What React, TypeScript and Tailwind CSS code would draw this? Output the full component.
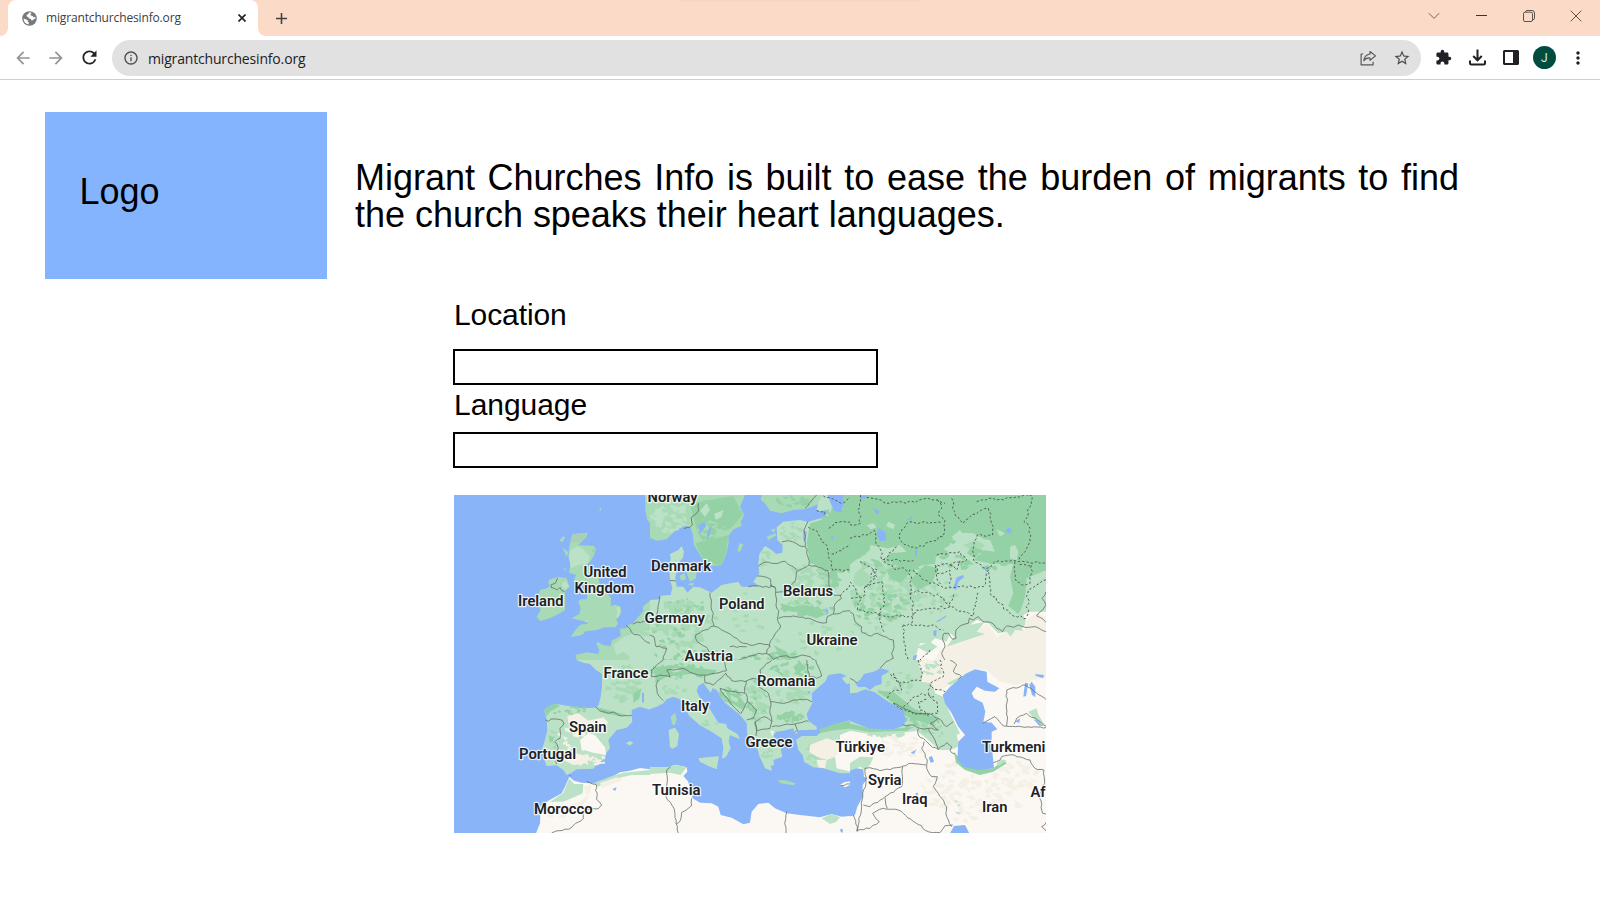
import type { ReactNode } from "react";
import { MdAdd, MdArrowBack, MdArrowForward, MdExtension, MdInfoOutline, MdMoreVert, MdRefresh, MdStarBorder } from "react-icons/md";

const WATER = "#8ab4f8";
const MID = "#a8dab5";
const LIGHT = "#bbe2c6";
const DARK = "#94d2a5";
const SAND = "#f5f0e5";
const PALE = "#fbf8f3";

type Shape = [fill: string, points: string];
/** Scatter area: centre, radii, count, blob size, fill. */
type Scatter = [cx: number, cy: number, rx: number, ry: number, count: number, size: number, fill: string];

interface Tile {
  id: string;
  x: number;
  y: number;
  shapes: Shape[];
  scatter: Scatter[];
  over: Shape[];
  borders: string[];
  dashed: string[];
}

const tiles: Tile[] = [
  {
    id: "nw", x: 450, y: 490,
    shapes: [
      [MID, "368,132 412,128 410,140 385,165 432,168 438,178 430,200 420,215 410,225 425,235 445,262 450,285 462,285 470,308 483,325 482,348 495,344 512,350 514,368 498,388 505,402 495,412 465,412 440,420 405,424 400,432 385,438 362,440 375,422 385,410 395,403 413,402 412,394 395,392 365,385 388,372 392,355 385,335 392,328 410,328 412,300 410,285 385,278 370,275 378,255 370,252 357,248 362,222 355,200 358,170 362,150"],
      [MID, "300,268 325,261 350,264 357,288 345,305 345,360 330,370 300,385 270,393 260,380 272,360 262,340 270,300 292,295 300,286 294,276"],
      [MID, "328,152 340,138 345,143 338,156"], [MID, "337,172 355,187 350,200"], [MID, "447,60 453,52 452,63"], [MID, "342,235 348,237 344,244"],
      [MID, "585,15 600,15 600,100 592,90 586,60"],
      [MID, "600,332 578,350 580,362 565,380 548,400 530,407 528,415 510,416 512,438 485,452 482,468 460,466 445,457 438,460 448,480 445,492 410,487 376,495 382,513 415,520 430,527 600,527"],
    ],
    scatter: [[545, 490, 20, 30, 6, 8, LIGHT], [560, 500, 35, 20, 10, 6, DARK]],
    over: [
      ["#aacfb8", "370,132 410,129 405,145 385,155 365,160 362,150"],
      [LIGHT, "360,182 385,168 402,180 420,200 412,222 385,225 362,235 358,205"],
      [LIGHT, "490,465 525,438 600,420 600,527 485,527 500,500"], [MID, "560,420 600,428 600,440 575,436"], [MID, "490,500 520,485 540,500 525,527 495,527"],
      [LIGHT, "345,272 358,290 345,300 335,282"], [DARK, "425,182 436,175 430,188"], [LIGHT, "398,390 415,392 411,398"],
      [LIGHT, "498,350 510,352 508,378 498,388 502,365"],
    ],
    borders: ["323,264 316,280 304,284 303,292 322,300 330,292 335,302 344,304", "528,406 540,416 552,434 570,436 580,448 600,460", "548,402 562,396 600,395"],
    dashed: [],
  },
  {
    id: "n", x: 650, y: 490,
    shapes: [
      [MID, "-2,15 285,15 270,50 282,75 272,95 275,108 250,118 235,138 236,160 228,195 215,225 185,228 165,222 150,195 132,165 128,130 120,112 105,108 80,118 50,148 20,152 -2,142"],
      [MID, "335,15 332,30 345,40 360,62 395,70 430,60 465,58 500,45 530,15"],
      [LIGHT, "602,15 602,527 -2,527 -2,330 30,328 30,317 62,315 67,292 60,270 58,240 62,205 60,192 85,180 95,168 102,185 98,205 85,218 82,240 76,262 80,290 100,290 112,308 130,290 150,292 185,308 215,285 240,280 265,276 275,290 300,290 325,287 310,275 328,250 325,225 328,192 345,168 365,180 378,192 397,188 398,165 382,150 380,112 400,95 450,90 475,96 500,88 528,82 524,68 500,60 505,35 520,15"],
      [MID, "262,182 268,160 280,163 270,186"], [MID, "350,140 375,130 380,136 355,150"], [MID, "362,120 376,115 372,128"],
      [MID, "110,250 125,235 140,238 138,265 120,275"], [MID, "88,258 104,250 108,268 94,272"], [MID, "112,282 132,278 128,288"],
    ],
    scatter: [
      [55, 80, 50, 48, 32, 10, LIGHT], [190, 90, 55, 70, 34, 10, DARK], [430, 35, 55, 14, 20, 8, DARK], [425, 125, 32, 28, 18, 8, MID],
      [90, 400, 85, 70, 60, 13, MID], [280, 370, 90, 60, 14, 9, MID], [110, 345, 60, 20, 16, 6, DARK], [60, 430, 50, 50, 14, 8, DARK],
      [550, 180, 50, 120, 80, 13, DARK], [460, 270, 80, 40, 40, 12, MID], [470, 355, 75, 22, 34, 9, DARK], [455, 320, 70, 30, 26, 10, MID],
      [480, 450, 105, 50, 14, 9, MID], [150, 500, 140, 20, 44, 8, DARK], [380, 500, 80, 18, 22, 8, DARK], [350, 210, 30, 25, 12, 9, MID],
    ],
    over: [
      [DARK, "480,100 600,65 600,240 550,250 530,230 480,220 470,160"], [DARK, "560,15 600,15 600,80 530,90 545,60 580,60"],
      [DARK, "135,160 235,135 228,190 215,224 165,220"], [DARK, "120,40 250,18 278,75 240,118 180,90 140,120"],
      [LIGHT, "150,62 170,40 180,60 165,80"], [LIGHT, "192,72 220,60 215,80 198,90"],
      [LIGHT, "15,80 30,55 45,75 35,105 18,110"], [LIGHT, "85,50 110,42 105,65 88,72"],
      [LIGHT, "335,230 400,218 430,245 420,285 385,290 350,255"],
      [DARK, "390,340 430,350 470,345 530,372 500,385 440,365 400,362"], [DARK, "370,465 410,485 430,515 395,505"],
      [WATER, "532,15 578,15 580,35 575,68 552,62 540,35"], [WATER, "145,105 165,96 168,108 150,132"], [WATER, "172,125 182,108 182,130 170,150"],
      [WATER, "460,120 470,125 466,155 460,150"], [WATER, "540,142 552,138 548,150"], [WATER, "528,350 536,365 530,378"], [WATER, "500,65 530,60 528,80 505,78"],
    ],
    borders: [
      "145,40 146,62 138,72 124,82 127,104 120,112 102,116", "60,271 78,273", "180,308 184,330 183,350 190,370 186,390 192,408",
      "192,408 165,420 137,435 142,455 170,472 178,486", "192,408 215,420 240,432 262,446 280,460 310,466 330,460 355,464 362,470",
      "360,285 376,292 380,330 378,345 386,362 382,388 392,408 375,432 362,452 350,490", "295,290 320,288 375,292", "322,258 350,262 362,268 364,288",
      "325,228 345,216 385,220 405,214 430,230 442,242 436,272 415,290 400,305 378,307", "395,156 415,152 438,160 450,168 464,170",
      "474,95 462,120 466,160 470,190 478,222 460,235 445,242", "475,225 505,232 534,242 536,275 542,300 550,315 568,315 575,325 556,340 550,372 532,380 530,398",
      "385,385 400,380 440,380 485,388 500,395 530,398", "550,372 600,362", "30,318 24,350 20,375 0,400", "0,435 12,440 18,470 50,475 40,500 45,527",
      "230,518 262,512 300,498 325,490 350,490 370,508 400,498 430,502 455,495 480,500 498,512 500,527", "240,470 290,470", "500,15 485,32 465,55",
    ],
    dashed: ["475,112 500,122 512,145 525,160 535,190 545,215 548,242 600,240", "536,115 555,98 600,96", "545,192 575,182 600,165", "520,18 555,30 582,38 600,22", "500,62 525,66 520,78", "600,285 585,300 570,318"],
  },
  {
    id: "ne", x: 850, y: 490,
    shapes: [[LIGHT, "-2,15 590,15 590,527 -2,527"]],
    scatter: [[110, 300, 105, 85, 130, 11, MID], [380, 190, 120, 50, 50, 10, DARK], [120, 200, 115, 50, 55, 10, DARK], [90, 350, 85, 45, 40, 9, DARK], [260, 320, 60, 50, 26, 8, MID], [60, 420, 55, 30, 10, 8, MID]],
    over: [
      [DARK, "-2,15 590,15 590,250 560,265 530,300 520,345 505,372 475,348 490,310 480,260 490,222 430,222 370,210 400,185 425,160 370,130 320,128 300,160 290,190 258,200 255,222 215,225 190,240 150,235 110,200 60,180 30,200 -2,225"],
      [LIGHT, "305,140 330,120 345,140 420,150 435,185 385,178 340,200 280,178 300,165 335,165"], [LIGHT, "480,170 495,165 505,185 500,210 480,205"], [LIGHT, "440,118 465,130 450,140"],
      [LIGHT, "60,165 115,175 150,165 170,185 120,190 100,215 60,205"], [LIGHT, "115,95 135,105 130,118 108,108"], [LIGHT, "530,265 590,240 590,380 535,370 510,372 525,320"],
      [MID, "15,250 50,220 80,240 65,270 30,290 10,280"], [DARK, "110,240 165,220 185,245 150,280 120,265"], [DARK, "180,270 225,225 265,235 245,280 205,300"],
      [MID, "340,165 375,150 405,165 380,190"], [DARK, "365,170 395,180 375,205 350,190"], [LIGHT, "50,105 70,100 80,112 62,118"], [LIGHT, "40,240 70,225 90,245 65,262"],
      [PALE, "590,355 555,365 540,365 520,375 530,400 510,420 490,405 440,425 415,400 380,390 340,420 345,435 320,445 300,430 290,455 255,445 240,460 210,460 200,490 190,527 590,527"],
      [SAND, "590,380 555,370 525,395 525,422 490,412 440,440 410,400 370,430 340,450 300,460 270,480 245,527 590,527"],
      [LIGHT, "330,410 405,395 380,425 405,432 350,450 290,470 312,440"], [LIGHT, "440,412 500,395 520,422 495,420 482,440 470,425 442,430"],
      [LIGHT, "200,470 240,455 262,470 235,490"], [LIGHT, "540,345 590,310 590,365 560,365"],
      [WATER, "85,115 105,125 110,150 90,155 80,130"], [WATER, "30,18 52,15 45,26 32,26"], [WATER, "70,55 88,62 84,74 76,70"], [WATER, "465,125 475,112 487,120 480,130"],
      [WATER, "310,295 320,262 340,255 342,262 325,275 318,300"], [WATER, "168,92 190,76 184,88"], [WATER, "250,422 260,420 258,440 250,436"], [WATER, "258,395 290,375 286,382 264,396"],
      [WATER, "195,175 202,182 200,200 196,200"], [WATER, "400,232 418,240 408,245"], [WATER, "270,216 285,222 280,228"], [WATER, "190,498 202,494 196,514 188,518"],
    ],
    borders: ["0,365 10,372 15,395 35,410 36,428 65,438 82,430 110,442 130,450 132,472 125,490 130,505 115,515 90,524", "588,305 576,325 588,345 560,378 580,388 588,398", "588,425 555,410 525,412 505,405 490,412 470,408 458,425 440,415 430,402 395,392 385,380 370,390 358,385 355,400 330,408 318,420 318,445 308,448 296,430 282,430 278,450 285,470 275,490 285,510 300,527"],
    dashed: [
      "32,15 24,60 32,100 0,104", "50,22 85,28 110,40 150,35 195,38 215,28 262,30 285,40", "262,30 275,55 265,75 285,90 278,140 240,155 220,170 180,172 150,150 152,125 170,100 275,98",
      "0,145 50,135 75,122 78,160 92,180 95,210 190,212", "305,25 315,75 340,100 360,80 415,55", "380,35 415,25 440,30 500,20 545,15 535,70 522,95 540,115 535,165 510,200 505,215 588,218",
      "415,55 425,100 428,135 382,135 372,165 370,210 410,235 435,215 505,215", "260,195 330,185 350,210 300,225 260,225 260,265 275,290 330,290 400,290 415,240 420,310 450,340 485,375 530,385",
      "30,215 60,230 80,260 45,290 40,320 0,325", "140,170 100,210 130,235 180,240 180,310 190,345 185,400", "45,290 95,275 105,320 100,350 85,375 185,380 200,360 300,350 370,378 385,305",
      "0,275 30,320 22,360 85,372 105,430", "180,310 200,300 270,320 300,350 310,310", "160,405 250,405 280,420", "160,405 162,450 175,510", "495,215 500,275 515,285 540,280 545,225 505,225", "588,270 535,300 530,380", "240,480 210,510 195,527", "190,240 220,270 270,290",
      "62,255 72,235 82,240 75,258 62,262", "255,225 262,250 300,240 300,290", "300,225 320,240 330,212",
    ],
  },
  {
    id: "sw", x: 450, y: 660,
    shapes: [
      [LIGHT, "378,0 400,8 420,12 438,30 456,42 456,80 452,110 446,135 437,143 395,145 355,138 320,132 300,138 283,150 290,178 292,210 285,240 278,262 280,290 290,318 320,316 340,330 350,345 362,340 380,328 430,326 440,312 465,297 468,280 480,265 475,240 500,210 530,203 547,185 545,168 545,150 570,140 602,150 602,-2"],
      [PALE, "358,350 372,362 395,368 430,370 460,360 490,348 510,337 540,332 570,324 602,328 602,520 258,520 270,490 272,440 295,422 335,400 345,380"],
      [LIGHT, "528,250 540,243 550,248 540,257"],
    ],
    scatter: [[520, 70, 50, 55, 40, 10, MID], [350, 150, 60, 12, 20, 6, DARK], [308, 245, 10, 50, 14, 6, MID], [380, 220, 60, 50, 34, 9, SAND], [420, 300, 45, 18, 20, 7, SAND], [330, 455, 45, 20, 20, 7, SAND]],
    over: [
      [DARK, "283,148 315,130 330,138 300,155 290,170"], [DARK, "440,142 475,150 530,165 510,168 460,160"], [DARK, "550,100 575,85 568,115 550,130"], [DARK, "298,228 312,232 308,245 298,243"],
      [SAND, "352,168 385,160 415,182 460,172 475,188 460,200 440,195 400,205 370,200 355,188"], [PALE, "390,240 415,220 435,225 465,262 468,285 430,278 395,268"], [SAND, "330,295 370,278 420,290 410,310 370,315"],
      [LIGHT, "358,355 372,372 400,372 398,400 375,410 340,425 300,425 340,398"], [SAND, "400,380 425,372 420,400 390,425 350,440 300,435 290,460 340,462 392,442 415,415"],
      [LIGHT, "430,370 480,350 520,338 602,330 602,345 545,345 480,360 445,380"], [SAND, "450,368 500,352 520,360 455,385"], [WATER, "487,388 500,380 496,393"],
      [WATER, "576,98 582,98 582,128 576,126"],
    ],
    borders: ["437,140 448,152 475,160 490,156 515,168 545,166", "286,180 296,184 303,177 337,181 342,192 330,205 330,235 315,245 325,265 318,285 320,312", "410,365 438,373 440,418 455,435 445,446 400,448 400,475 355,508 318,513 305,519", "358,345 362,349"],
    dashed: [],
  },
  {
    id: "s", x: 650, y: 660,
    shapes: [
      [LIGHT, "-2,-2 602,-2 602,70 590,72 575,55 590,48 570,40 535,45 525,65 510,78 485,100 487,130 470,162 475,182 500,200 500,210 455,212 435,222 430,205 400,212 378,215 370,228 400,262 392,268 397,290 370,300 372,315 362,318 366,333 345,325 335,302 328,288 322,265 310,250 292,225 290,190 270,165 225,128 200,90 188,84 182,98 168,80 160,68 145,78 140,92 148,110 178,145 205,188 228,192 232,205 262,222 270,238 240,225 236,245 242,265 228,290 216,296 220,265 215,235 180,212 150,196 118,168 105,145 90,118 70,110 50,118 40,130 20,140 -2,148"],
      [PALE, "-2,322 55,322 75,314 110,322 112,335 100,348 115,365 118,382 128,415 150,428 185,430 205,440 212,465 245,473 280,493 300,488 305,455 325,432 355,428 375,445 410,460 450,465 510,472 545,462 575,470 602,468 602,520 -2,520"],
      [LIGHT, "438,240 455,228 500,228 525,205 560,192 602,180 602,340 570,340 520,325 490,322 462,305 458,285 445,270"],
      [LIGHT, "56,210 75,203 87,222 82,258 68,266 60,262 58,235"], [MID, "62,170 75,158 80,178 74,197 66,192"], [LIGHT, "145,295 170,292 207,289 200,328 175,318 150,305"],
      [MID, "383,360 405,361 437,370 430,376 392,370"], [PALE, "570,374 585,366 602,364 602,374 585,382"],
    ],
    scatter: [[90, 35, 88, 22, 60, 7, DARK], [60, 90, 50, 12, 10, 8, MID], [240, 105, 30, 24, 26, 8, DARK], [320, 120, 30, 65, 36, 10, MID], [420, 80, 55, 50, 34, 10, MID], [420, 170, 42, 14, 26, 8, DARK], [352, 285, 18, 20, 12, 6, MID], [170, 190, 28, 8, 9, 6, MID], [500, 280, 35, 30, 24, 7, MID], [430, 25, 70, 20, 22, 8, DARK], [320, 120, 28, 60, 14, 7, DARK]],
    over: [
      [DARK, "20,25 60,15 110,20 200,30 190,45 120,42 50,50 15,70"], [LIGHT, "60,28 80,24 95,32 70,38"], [DARK, "225,92 270,112 286,132 280,150 245,130"], [LIGHT, "240,105 265,116 262,128 245,120"], [DARK, "430,20 450,5 470,25 440,40"],
      [SAND, "480,255 530,235 575,250 570,285 530,300 500,290 478,275"], [PALE, "570,225 602,212 602,335 560,325 555,290 570,270"], [SAND, "500,300 530,300 525,325 505,322"],
      [DARK, "510,208 560,190 602,182 602,205 545,212 510,220"], [LIGHT, "-2,322 55,322 75,314 110,322 92,345 60,338 0,342"], [LIGHT, "515,475 545,462 570,472 558,486 540,492"], [WATER, "570,508 578,506 578,518 572,516"],
      [WATER, "470,92 482,95 478,103"], [WATER, "440,211 502,209 502,225 445,227"], [SAND, "360,212 372,212 368,230"],
    ],
    borders: [
      "40,0 20,15 5,30 5,50 30,45 60,50 50,30 100,25 130,40 165,45 195,40 230,32 222,0", "25,60 18,75 22,100 40,122", "165,45 165,68 190,75 205,60 228,40", "228,40 245,62 285,65 310,55 330,60 330,30 350,10 365,0",
      "210,85 225,90 285,100 288,62", "210,85 225,108 270,160", "288,100 292,125 272,162", "292,125 320,150 310,175 290,180", "330,62 325,80 355,100 362,125 360,160 366,185 360,205 320,212 315,185 345,170 366,185", "315,185 320,212 318,228",
      "362,125 400,130 430,120 470,118 486,125", "366,200 400,195 435,192 470,182 475,185", "435,192 442,210 434,218", "470,0 478,50 500,55 515,48 505,20 497,0", "62,320 50,330 52,365 48,410 72,445 78,490 85,519", "125,415 125,437 95,457 92,480 78,492", "410,455 404,490 408,519", "572,376 600,372",
    ],
    dashed: [],
  },
  {
    id: "se", x: 850, y: 660,
    shapes: [
      [PALE, "-2,-2 590,-2 590,520 -2,520"],
      [SAND, "215,-2 590,-2 590,50 500,75 450,65 410,30 370,28 330,55 290,80 250,100 215,60"],
      [LIGHT, "-2,-2 218,-2 205,15 218,35 215,65 245,70 255,100 280,110 300,160 330,220 325,260 300,270 268,270 235,240 200,212 150,220 90,228 -2,212"],
    ],
    scatter: [[120, 222, 80, 8, 16, 8, LIGHT], [180, 180, 85, 20, 40, 8, DARK], [130, 70, 60, 40, 22, 9, MID], [150, 260, 80, 30, 34, 9, SAND], [330, 400, 110, 90, 70, 11, SAND], [500, 370, 75, 70, 46, 11, SAND], [250, 195, 35, 40, 20, 8, MID], [250, 30, 25, 25, 14, 7, LIGHT], [350, 420, 80, 60, 5, 5, LIGHT]],
    over: [
      [DARK, "80,92 130,95 190,145 270,180 250,190 190,180 165,165 130,130"], [DARK, "-2,190 60,205 150,205 195,200 170,212 60,216 -2,206"], [LIGHT, "-2,310 30,290 70,292 60,315 45,330 30,320 0,335"],
      [PALE, "320,225 345,212 342,235 325,245"], [DARK, "312,275 325,290 345,315 385,328 430,325 460,300 470,310 430,335 390,345 345,330 318,308"], [LIGHT, "440,310 455,298 470,302 445,318"], [LIGHT, "535,155 560,145 565,165 585,195 560,185"], [LIGHT, "290,70 335,48 325,65 300,75"],
      [WATER, "15,70 30,60 42,42 70,35 92,25 118,32 95,48 95,72 75,78 60,90 45,80 25,82"],
      [WATER, "-2,100 20,98 45,88 75,97 110,122 160,150 168,180 160,198 130,208 60,206 -2,182"],
      [WATER, "325,60 342,45 350,40 375,28 410,35 412,65 448,85 435,95 405,92 380,80 365,100 372,115 398,128 406,155 400,185 425,188 442,208 425,215 425,240 410,245 425,255 432,325 385,330 340,320 322,298 325,245 345,225 325,200 305,160 285,130 278,105 300,80"],
      [WATER, "-2,332 20,325 40,328 42,350 52,355 38,375 38,410 22,440 15,465 -2,470"], [WATER, "300,520 312,498 345,495 358,520"],
      [WATER, "520,110 525,68 535,70 528,108"], [WATER, "538,75 545,65 556,80 556,112 546,105"], [WATER, "555,42 582,45 580,55 558,48"], [WATER, "495,185 510,175 508,188"], [WATER, "182,278 200,268 192,282"], [WATER, "236,292 246,288 252,305 242,308"], [WATER, "550,178 562,182 580,198 568,197"], [WATER, "196,400 204,398 202,410"],
    ],
    borders: [
      "90,25 108,5 120,0", "0,55 20,68", "300,0 320,15 310,35 335,50 325,58", "160,195 190,195 210,205 235,205 265,210 240,190 265,175 235,160 200,160 175,150 130,130", "265,175 290,200 310,185", "205,205 205,225 240,255 265,268 255,240 235,205", "265,268 290,248 305,260 300,272 315,282", "222,245 215,265 232,300 230,325 245,350 262,350 250,380 265,400 290,440 290,470 305,500", "45,325 60,323 90,332 150,322 185,310 228,315",
      "158,320 155,380 105,410 60,440 40,435", "45,325 48,370 38,400 35,440 20,512 60,505 88,485 68,460 100,445 145,450 235,515 270,518 285,497 308,495", "105,412 112,445", "10,465 22,500 22,515", "470,198 470,90 528,75 590,120", "398,190 435,170 460,198 590,202", "492,192 500,175 530,160 570,185 590,200", "430,308 450,300 455,290 492,285 540,300 555,325 582,330 584,370 570,405 578,460 590,462", "590,485 575,500 590,515",
    ],
    dashed: ["205,0 218,40 212,62 190,62 150,70 120,40", "270,0 280,50 240,70 235,100 260,125 265,160 240,165 210,150 205,125 235,118", "130,40 150,75 155,90 125,95 110,120", "160,140 185,115 215,100 255,110", "245,80 285,95", "130,130 165,150 200,162 235,168"],
  },
];

const labels: [text: string, x: number, width: number, y: number][] = [
  ["Norway", 647.5, 50, 501.5], ["United", 583.5, 43, 576.6], ["Kingdom", 574.5, 59.5, 593], ["Ireland", 518, 45.5, 606], ["Denmark", 651, 60, 570.6],
  ["Poland", 719, 45.5, 608.5], ["Belarus", 783, 50, 595.5], ["Germany", 644.5, 60.5, 622.8], ["Ukraine", 806.5, 51, 645], ["Austria", 684.5, 48.5, 661],
  ["France", 603.5, 45, 678], ["Spain", 569, 37.5, 731.5], ["Portugal", 519, 57, 758.5], ["Morocco", 534, 58.5, 813.7], ["Italy", 681, 28, 711],
  ["Romania", 757, 58.5, 686], ["Greece", 745.5, 47, 747], ["Tunisia", 652, 48.5, 795], ["Türkiye", 835.5, 49.5, 752], ["Syria", 868, 33.5, 785],
  ["Iraq", 902, 25.5, 804], ["Turkmeni", 982, 63.5, 752], ["Iran", 982, 25.5, 811.7], ["Af", 1030.5, 15, 797.3],
];

function random(seed: number) {
  let s = seed;
  return () => {
    s = (s * 1664525 + 1013904223) % 4294967296;
    return s / 4294967296;
  };
}

function blobs([cx, cy, rx, ry, count, size]: Scatter, seed: number) {
  const next = random(seed);
  let d = "";
  for (let i = 0; i < count; i++) {
    const angle = next() * Math.PI * 2;
    const reach = Math.sqrt(next());
    const x = cx + Math.cos(angle) * rx * reach;
    const y = cy + Math.sin(angle) * ry * reach;
    const tilt = (next() - 0.3) * 1.2;
    for (let k = 0; k < 7; k++) {
      const a = (k / 7) * Math.PI * 2;
      const r = size * (0.3 + next() * 0.9);
      const px = Math.cos(a) * r * 1.25;
      const py = Math.sin(a) * r * 0.75;
      d += `${k ? "L" : "M"}${(x + px * Math.cos(tilt) - py * Math.sin(tilt)).toFixed(1)} ${(y + px * Math.sin(tilt) + py * Math.cos(tilt)).toFixed(1)}`;
    }
    d += "Z";
  }
  return d;
}

/** Splits each long segment of a border and moves the new points a little sideways. */
function wander(points: string, amount: number) {
  const nodes = points.split(" ").map((pair) => pair.split(",").map(Number));
  const next = random(nodes.length * 31 + nodes[0][0] * 7 + nodes[0][1]);
  const out: string[] = [];
  nodes.forEach(([x, y], i) => {
    out.push(`${x},${y}`);
    const after = nodes[i + 1];
    if (!after) return;
    const dx = after[0] - x;
    const dy = after[1] - y;
    const length = Math.hypot(dx, dy);
    const steps = Math.floor(length / 9);
    for (let k = 1; k < steps; k++) {
      const shift = ((next() - 0.5) * amount) / length;
      out.push(`${(x + (dx * k) / steps - dy * shift).toFixed(1)},${(y + (dy * k) / steps + dx * shift).toFixed(1)}`);
    }
  });
  return out.join(" ");
}

function EuropeMap() {
  return (
    <svg className="block h-[338px] w-[592px]" viewBox="454 495 592 338" role="img">
      <rect x="454" y="495" width="592" height="338" fill={WATER} />
      {tiles.map((tile, index) => (
        <g key={tile.id} clipPath={`url(#clip-${tile.id})`}>
          <clipPath id={`clip-${tile.id}`}>
            <rect x={tile.x} y={tile.y} width="200" height={tile.y === 490 ? 170 : 175} />
          </clipPath>
          <g transform={`translate(${tile.x} ${tile.y}) scale(0.33333)`}>
            {tile.shapes.map(([fill, points]) => <polygon key={points} fill={fill} points={points} />)}
            {tile.scatter.map((area, i) => <path key={i} fill={area[6]} d={blobs(area, index * 97 + i * 13 + 5)} />)}
            {tile.over.map(([fill, points]) => <polygon key={points} fill={fill} points={points} />)}
            {tile.borders.map((points) => <polyline key={points} points={wander(points, 5)} fill="none" stroke="#5f6b66" strokeWidth="2.3" strokeLinejoin="round" />)}
            {tile.dashed.map((points) => <polyline key={points} points={wander(points, 9)} fill="none" stroke="#4f5655" strokeWidth="2.8" strokeDasharray="7 6" />)}
          </g>
        </g>
      ))}
      <g className="font-['Roboto',sans-serif] text-[14px] font-semibold" fill="#202124" stroke="#ffffff" strokeOpacity="0.75" strokeWidth="2.5" strokeLinejoin="round" paintOrder="stroke">
        {labels.map(([text, x, width, y]) => (
          <text key={text} x={x} y={y} textLength={width} lengthAdjust="spacingAndGlyphs">{text}</text>
        ))}
      </g>
    </svg>
  );
}

function Cell({ children, className = "w-[33.5px]" }: { children: ReactNode; className?: string }) {
  return <div className={`flex shrink-0 items-center justify-center ${className}`}>{children}</div>;
}

function TabStrip() {
  return (
    <div className="relative flex h-9 bg-[#fcdac8]">
      <div className="absolute left-[680px] top-0 h-[3px] w-[240px] bg-linear-to-b from-[#f6d3bf] to-[#fcdac8]" />
      <div className="flex w-2 items-end bg-white"><div className="h-full w-2 rounded-br-lg bg-[#fcdac8]" /></div>
      <div className="flex h-9 w-[250px] items-center rounded-t-lg bg-white pl-[13.500px] pr-2.5">
        <svg className="size-[15px]" viewBox="0 0 15 15">
          <circle cx="7.500" cy="7.500" r="7.300" fill="#77797c" />
          <path fill="#fff" d="M7.200 1.600 5.800 3.400 4.600 3.800 4.800 5.500 6.300 6.200 7 7.600 9 8 9.400 9.500 11.200 9 12.600 7.600 13.400 8 13.500 6 11.600 6.200 10.600 5 9 4.600 8.400 3.400 9.400 2.300 9 1.600ZM1.500 7.600 3.800 8.200 5.800 9.300 5.600 10.600 6.900 11.200 6.400 13.400Q2 12.600 1.500 7.600Z" />
        </svg>
        <span className="ml-[9.500px] flex-1 whitespace-nowrap font-['Open_Sans',sans-serif] text-[12px] tracking-[-0.15px] text-[#3c4043]">migrantchurchesinfo.org</span>
        <svg className="mr-[2.500px] size-2" viewBox="0 0 8 8" stroke="#202124" strokeWidth="1.700"><path d="m.5.5 7 7M7.500.5l-7 7" /></svg>
      </div>
      <div className="w-2 bg-white"><div className="h-full w-2 rounded-bl-lg bg-[#fcdac8]" /></div>
      <Cell className="w-[31px]"><MdAdd className="size-[19px] text-[#45403e]" /></Cell>
      <div className="ml-auto flex h-[31px]">
        <Cell className="w-[47.5px]"><svg className="h-2 w-3" viewBox="0 0 12 8" fill="none" stroke="#6f625c"><path d="M.8 1.2 6 6.4l5.2-5.2" /></svg></Cell>
        <Cell className="w-[47.5px]"><div className="h-px w-[11px] bg-[#3c3430]" /></Cell>
        <Cell className="w-[47.5px]"><svg className="size-3" viewBox="0 0 12 12" fill="none" stroke="#5d524c"><rect x=".5" y="2.2" width="9" height="9.3" rx="1.5" /><path d="M2.5 2V1.8Q2.8.5 4 .5h5q2.5 0 2.5 2.5v5q0 1.5-1.7 2" /></svg></Cell>
        <Cell className="w-[47.5px]"><svg className="size-3" viewBox="0 0 12 12" fill="none" stroke="#5d524c"><path d="m.7.7 10.6 10.6M11.3.7.7 11.3" /></svg></Cell>
      </div>
    </div>
  );
}

function Toolbar() {
  return (
    <div className="flex h-11 items-center border-b border-[#cfcfcf] pl-1.5 pr-[5.5px]">
      <Cell><MdArrowBack className="size-5 text-[#929496]" /></Cell>
      <Cell><MdArrowForward className="size-5 text-[#929496]" /></Cell>
      <Cell><MdRefresh className="size-[21px] text-[#202124]" /></Cell>
      <div className="ml-[5.5px] mr-[6px] flex h-9 flex-1 items-center rounded-full bg-[#e1e1e1] pl-[11px] pr-[10px]">
        <MdInfoOutline className="size-4 text-[#4a4d51]" />
        <span className="ml-[9px] flex-1 whitespace-nowrap pt-0.5 font-['Open_Sans',sans-serif] text-[14px] tracking-[-0.17px] text-[#202124]">migrantchurchesinfo.org</span>
        <Cell><svg className="h-4 w-[17px]" viewBox="0 0 17 16" fill="none" stroke="#55585c" strokeWidth="1.2"><path d="M3.2 4H1.1v10.8h12v-3M10 1.5l5.5 4.4L10 10.3V8Q5.8 7.6 3.8 10.8 4.4 5 10 4Z" strokeLinejoin="round" /></svg></Cell>
        <Cell className="-mr-2 w-[33.5px]"><MdStarBorder className="size-[18px] text-[#4a4d51]" /></Cell>
      </div>
      <Cell><MdExtension className="size-[17px] text-[#202124]" /></Cell>
      <Cell><svg className="size-[17px]" viewBox="0 0 17 17" fill="none" stroke="#202124" strokeWidth="2"><path d="M8.5.5V11M4.2 7l4.3 4.3L12.8 7M1 11.5V14q0 1.5 1.5 1.5h12Q16 15.500 16 14v-2.500" /></svg></Cell>
      <Cell><svg className="h-[15px] w-4" viewBox="0 0 16 15"><path fill="#202124" fillRule="evenodd" d="M1 0h14l1 1v13l-1 1H1l-1-1V1ZM2 2v11h8V2Z" /></svg></Cell>
      <Cell><div className="flex size-[23px] items-center justify-center rounded-full bg-[#004d40] font-['Roboto',sans-serif] text-[12px] leading-none text-[#dfe9e7]">J</div></Cell>
      <Cell><MdMoreVert className="size-5 text-[#202124]" /></Cell>
    </div>
  );
}

export default function App() {
  return (
    <div className="h-[900px] w-[1600px] overflow-hidden bg-white font-['Liberation_Sans',Arial,sans-serif] text-black">
      <TabStrip />
      <Toolbar />
      <main className="pt-8">
        <header className="flex h-[167px] pl-[44.500px]">
          <div className="w-[282px] bg-[#85b4ff] pl-[35px] pt-[59px] text-[36px] leading-[41px]">Logo</div>
          <p className="ml-[28.500px] mt-[47px] w-[1104px] text-justify text-[36px] leading-[37.3px] tracking-[-0.02px]">
            Migrant Churches Info is built to ease the burden of migrants to find the church speaks their heart languages.
          </p>
        </header>
        <div className="ml-[453px] flex w-[425px] flex-col pt-[18px]">
          <label htmlFor="location" className="pl-px text-[30px] leading-[36px] tracking-[-0.1px]">Location</label>
          <input id="location" className="mt-4 h-9 border-2 border-black outline-none" />
          <label htmlFor="language" className="mt-0.5 pl-px text-[30px] leading-[36px] tracking-[-0.05px]">Language</label>
          <input id="language" className="mt-[9px] h-9 border-2 border-black outline-none" />
        </div>
        <div className="ml-[454px] mt-[27px] w-[592px]"><EuropeMap /></div>
      </main>
    </div>
  );
}
